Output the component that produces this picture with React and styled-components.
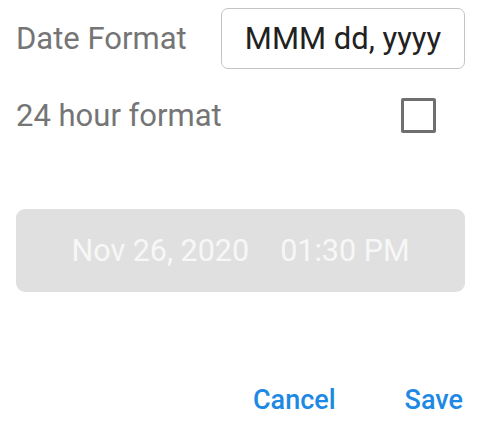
import styled, { createGlobalStyle } from "styled-components";

const GlobalStyle = createGlobalStyle`
  html, body {
    margin: 0;
    padding: 0;
    background: #ffffff;
    font-family: Roboto, "Noto Sans", sans-serif;
  }
`;

const Dialog = styled.div`
  width: 480px;
  height: 432px;
  box-sizing: border-box;
  padding: 8px 15px 0 16px;
  display: flex;
  flex-direction: column;
`;

const Row = styled.div`
  display: flex;
  align-items: center;
  justify-content: space-between;
  height: ${(props) => props.height || 48}px;
  margin-top: ${(props) => props.gap || 0}px;
`;

const Label = styled.span`
  font-size: 31px;
  color: #757575;
`;

const FormatInput = styled.div`
  width: 244px;
  height: 61px;
  box-sizing: border-box;
  border: 1px solid #c4c4c4;
  border-radius: 7px;
  display: flex;
  align-items: center;
  justify-content: center;
  font-size: 31px;
  color: #212121;
`;

const CheckBox = styled.div`
  width: 35px;
  height: 35px;
  box-sizing: border-box;
  border: 3px solid #6f6f6f;
  border-radius: 2px;
  margin-right: 29px;
`;

const Preview = styled.div`
  margin-top: 70px;
  height: 83px;
  border-radius: 9px;
  background: #e0e0e0;
  display: flex;
  align-items: center;
  justify-content: center;
  gap: 31px;
  font-size: 30.5px;
  color: #f7f7f7;
`;

const Actions = styled.div`
  margin-top: 88px;
  height: 40px;
  display: flex;
  justify-content: flex-end;
  align-items: center;
  gap: 69px;
  padding-right: 2px;
`;

const TextButton = styled.button`
  border: none;
  background: none;
  padding: 0;
  font-family: Roboto, "Noto Sans", sans-serif;
  font-weight: 500;
  font-size: 27px;
  color: #1e88e5;
`;

export default function App() {
  return (
    <>
      <GlobalStyle />
      <Dialog>
        <Row height={61}>
          <Label>Date Format</Label>
          <FormatInput>MMM dd, yyyy</FormatInput>
        </Row>
        <Row gap={22}>
          <Label>24 hour format</Label>
          <CheckBox />
        </Row>
        <Preview>
          <span>Nov 26, 2020</span>
          <span>01:30 PM</span>
        </Preview>
        <Actions>
          <TextButton>Cancel</TextButton>
          <TextButton>Save</TextButton>
        </Actions>
      </Dialog>
    </>
  );
}
